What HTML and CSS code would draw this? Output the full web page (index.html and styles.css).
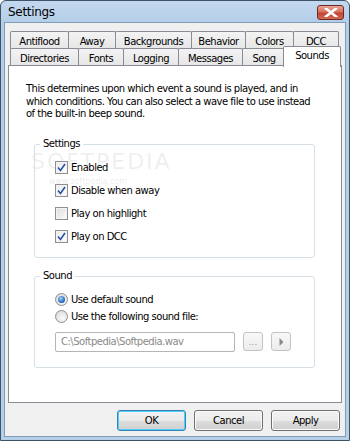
FILE: index.html
```html
<!DOCTYPE html>
<html>
<head>
<meta charset="utf-8">
<link rel="stylesheet" href="styles.css">
</head>
<body>
<div class="window">
  <div class="titlebar">
    <span class="title">Settings</span>
    <span class="close"><svg width="14" height="9" viewBox="0 0 14 9"><path d="M2 0.5 L12 8.5 M12 0.5 L2 8.5" stroke="#fff" stroke-width="2.6" stroke-linecap="square" fill="none"/></svg></span>
  </div>
  <div class="client">
    <div class="tabs">
      <div class="tabrow">
        <div class="tab w-antiflood">Antiflood</div>
        <div class="tab w-away">Away</div>
        <div class="tab w-backgrounds">Backgrounds</div>
        <div class="tab w-behavior">Behavior</div>
        <div class="tab w-colors">Colors</div>
        <div class="tab w-dcc">DCC</div>
      </div>
      <div class="tabrow">
        <div class="tab w-directories">Directories</div>
        <div class="tab w-fonts">Fonts</div>
        <div class="tab w-logging">Logging</div>
        <div class="tab w-messages">Messages</div>
        <div class="tab w-song">Song</div>
        <div class="tab selected w-sounds">Sounds</div>
      </div>
    </div>
    <div class="panel">
      <div class="watermark">SOFTPEDIA<sup>™</sup></div>
      <div class="watermark-url">www.softpedia.com</div>
      <p class="desc">This determines upon which event a sound is played, and in which conditions. You can also select a wave file to use instead of the built-in beep sound.</p>
      <div class="group group-settings">
        <span class="legend">Settings</span>
        <div class="check-list">
          <div class="check"><span class="cbox on"><svg width="9" height="9" viewBox="0 0 9 9"><path d="M1 4.5 L3.5 7.5 L8 1" stroke="#2a4fa8" stroke-width="1.6" fill="none"/></svg></span>Enabled</div>
          <div class="check"><span class="cbox on"><svg width="9" height="9" viewBox="0 0 9 9"><path d="M1 4.5 L3.5 7.5 L8 1" stroke="#2a4fa8" stroke-width="1.6" fill="none"/></svg></span>Disable when away</div>
          <div class="check"><span class="cbox"></span>Play on highlight</div>
          <div class="check"><span class="cbox on"><svg width="9" height="9" viewBox="0 0 9 9"><path d="M1 4.5 L3.5 7.5 L8 1" stroke="#2a4fa8" stroke-width="1.6" fill="none"/></svg></span>Play on DCC</div>
        </div>
      </div>
      <div class="group group-sound">
        <span class="legend">Sound</span>
        <div class="radio-list">
          <div class="radio"><span class="rbox on"><span class="dot"></span></span>Use default sound</div>
          <div class="radio"><span class="rbox"></span>Use the following sound file:</div>
        </div>
        <div class="file-row">
          <div class="textbox">C:\Softpedia\Softpedia.wav</div>
          <div class="smallbtn">...</div>
          <div class="smallbtn play"><svg width="5" height="8" viewBox="0 0 5 8"><path d="M0.5 0 L4.5 4 L0.5 8 Z" fill="#8a8a8a"/></svg></div>
        </div>
      </div>
    </div>
    <div class="buttons">
      <div class="btn default">OK</div>
      <div class="btn">Cancel</div>
      <div class="btn">Apply</div>
    </div>
  </div>
</div>
</body>
</html>
```

FILE: styles.css
```css
* { box-sizing: border-box; }
html, body { margin: 0; padding: 0; }
body {
  width: 350px;
  height: 441px;
  overflow: hidden;
  font-family: "DejaVu Sans", sans-serif;
  font-size: 10px;
  letter-spacing: -0.5px;
  color: #000;
  background: #fff;
}
.window {
  width: 350px;
  height: 441px;
  border: 1px solid #3d5366;
  border-radius: 6px 6px 0 0;
  background: linear-gradient(#c3d8ee 0px, #b4cde8 22px, #b6cfe9 100%);
  padding: 0 3px 3px 3px;
  display: flex;
  flex-direction: column;
}
.titlebar {
  height: 21px;
  display: flex;
  align-items: center;
  justify-content: space-between;
  padding-left: 4px;
  padding-right: 2px;
}
.title {
  font-family: "DejaVu Sans", sans-serif;
  font-size: 12px;
  color: #000;
  letter-spacing: -0.3px;
  margin-top: 1px;
}
.close {
  width: 27px;
  height: 15px;
  margin-top: 1px;
  border: 1px solid #6d2a24;
  border-radius: 3px;
  background: linear-gradient(#e8a598 0%, #d9705f 45%, #c24532 55%, #d26a52 100%);
  display: flex;
  align-items: center;
  justify-content: center;
}
.client {
  flex: 1;
  background: #f0f0f0;
  border: 1px solid #7f9db9;
  padding: 8px 3px 0 3px;
  display: flex;
  flex-direction: column;
  position: relative;
}
.tabs {
  padding-left: 2px;
  display: flex;
  flex-direction: column;
}
.tabrow {
  display: flex;
  height: 17px;
}
.tab {
  height: 18px;
  margin-right: -1px;
  border: 1px solid #898c95;
  border-bottom: none;
  border-radius: 2px 2px 0 0;
  background: linear-gradient(#f3f3f3, #e6e6e6);
  display: flex;
  justify-content: center;
  align-items: center;
  padding-top: 1px;
  white-space: nowrap;
}
.tab.selected {
  background: #fff;
  height: 21px;
  margin-top: -2px;
  margin-left: -2px;
  margin-right: 0;
  position: relative;
  z-index: 2;
  align-items: flex-start;
  padding-top: 3px;
}
.w-antiflood { width: 59px; }
.w-away { width: 48px; }
.w-backgrounds { width: 77px; }
.w-behavior { width: 55px; }
.w-colors { width: 49px; }
.w-dcc { width: 46px; }
.w-directories { width: 69px; }
.w-fonts { width: 46px; }
.w-logging { width: 56px; }
.w-messages { width: 65px; }
.w-song { width: 44px; }
.w-sounds { width: 58px; }

.panel {
  height: 338px;
  background: #fff;
  border: 1px solid #898c95;
  position: relative;
  padding: 17px 18px 0 17px;
}
.desc {
  margin: 0;
  width: 285px;
  line-height: 12.5px;
  position: relative;
}
.group {
  position: relative;
  margin-left: 8px;
  width: 281px;
  border: 1px solid #d5dfe5;
  border-radius: 3px;
}
.group-settings {
  margin-top: 23px;
  height: 114px;
  padding: 16px 0 0 20px;
}
.group-sound {
  margin-top: 18px;
  height: 92px;
  padding: 16px 0 0 20px;
}
.legend {
  position: absolute;
  top: -8px;
  left: 5px;
  background: #fff;
  padding: 0 3px;
  line-height: 14px;
}
.check-list {
  display: flex;
  flex-direction: column;
  gap: 10px;
}
.check, .radio {
  display: flex;
  align-items: center;
  height: 13px;
  position: relative;
}
.cbox {
  width: 13px;
  height: 13px;
  margin-right: 3px;
  border: 1px solid #8f8f8f;
  background: linear-gradient(135deg, #dcdcdc, #fbfbfb);
  box-shadow: inset 0 0 0 1px #f4f4f4;
  display: flex;
  align-items: center;
  justify-content: center;
}
.cbox.on {
  background: linear-gradient(135deg, #e8e8e8, #ffffff);
}
.radio-list {
  display: flex;
  flex-direction: column;
  gap: 4px;
}
.rbox {
  width: 13px;
  height: 13px;
  margin-right: 3px;
  border-radius: 50%;
  border: 1px solid #8f8f8f;
  background: radial-gradient(circle at 60% 65%, #fafafa, #d4d4d4);
  display: flex;
  align-items: center;
  justify-content: center;
}
.dot {
  width: 7px;
  height: 7px;
  border-radius: 50%;
  background: radial-gradient(circle at 40% 35%, #9ed0f5, #1c63b8 70%, #124a8e);
}
.file-row {
  display: flex;
  align-items: center;
  margin-top: 9px;
}
.textbox {
  width: 180px;
  height: 20px;
  border: 1px solid #b5b5b5;
  border-radius: 2px;
  background: #fff;
  color: #8a8a8a;
  padding-left: 5px;
  display: flex;
  align-items: center;
}
.smallbtn {
  width: 20px;
  height: 19px;
  margin-left: 8px;
  border: 1px solid #c3c3c3;
  border-radius: 3px;
  background: linear-gradient(#f8f8f8, #ececec);
  color: #9a9a9a;
  font-size: 9px;
  letter-spacing: 0;
  display: flex;
  align-items: center;
  justify-content: center;
}
.watermark {
  position: absolute;
  left: 22px;
  top: 83px;
  font-size: 22px;
  letter-spacing: 2px;
  color: rgba(120,120,120,0.12);
  z-index: 0;
}
.watermark sup { font-size: 6px; }
.watermark-url {
  position: absolute;
  left: 40px;
  top: 111px;
  font-size: 8px;
  letter-spacing: 0;
  color: rgba(120,120,120,0.16);
  z-index: 0;
}
.buttons {
  display: flex;
  justify-content: flex-end;
  gap: 8px;
  padding-top: 7px;
  padding-right: 2px;
}
.btn {
  width: 69px;
  height: 21px;
  border: 1px solid #707070;
  border-radius: 3px;
  background: linear-gradient(#f2f2f2 0%, #ebebeb 50%, #dddddd 51%, #cfcfcf 100%);
  box-shadow: inset 0 0 0 1px #fbfbfb;
  display: flex;
  align-items: center;
  justify-content: center;
}
.btn.default {
  border-color: #3c7fb1;
  box-shadow: inset 0 0 0 1px #48d2fc;
}
```
